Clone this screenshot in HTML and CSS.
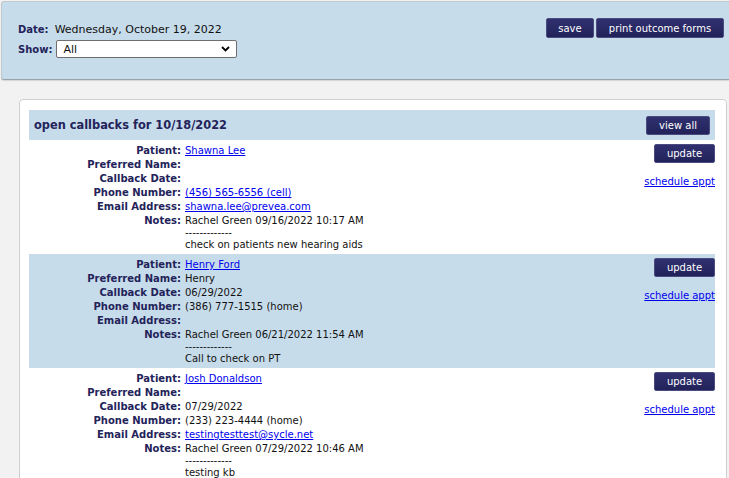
FILE: index.html
```html
<!DOCTYPE html>
<html>
<head>
<meta charset="utf-8">
<title>Callbacks</title>
<link rel="stylesheet" href="styles.css">
</head>
<body>
<div class="header">
  <div class="filters">
    <div class="field"><span class="flabel">Date:</span><span class="fvalue">Wednesday, October 19, 2022</span></div>
    <div class="field"><span class="flabel">Show:</span>
      <div class="select-wrap">
        <select class="select"><option>All</option></select>
        <svg class="chev" width="9" height="6" viewBox="0 0 9 6"><path d="M1 1 L4.5 4.5 L8 1" fill="none" stroke="#000" stroke-width="1.8"/></svg>
      </div>
    </div>
  </div>
  <div class="actions">
    <button class="btn btn-save">save</button>
    <button class="btn btn-print">print outcome forms</button>
  </div>
</div>

<div class="card">
  <div class="titlebar">
    <span class="title">open callbacks for 10/18/2022</span>
    <button class="btn btn-view">view all</button>
  </div>

  <div class="record">
    <div class="fields">
      <span class="lbl">Patient:</span><span class="val"><a href="#">Shawna Lee</a></span>
      <span class="lbl">Preferred Name:</span><span class="val"></span>
      <span class="lbl">Callback Date:</span><span class="val"></span>
      <span class="lbl">Phone Number:</span><span class="val"><a href="#">(456) 565-6556 (cell)</a></span>
      <span class="lbl">Email Address:</span><span class="val"><a href="#">shawna.lee@prevea.com</a></span>
      <span class="lbl">Notes:</span><span class="val notes">Rachel Green 09/16/2022 10:17 AM<br>-------------<br>check on patients new hearing aids</span>
    </div>
    <div class="side">
      <button class="btn btn-update">update</button>
      <a href="#" class="sched">schedule appt</a>
    </div>
  </div>

  <div class="record alt">
    <div class="fields">
      <span class="lbl">Patient:</span><span class="val"><a href="#">Henry Ford</a></span>
      <span class="lbl">Preferred Name:</span><span class="val">Henry</span>
      <span class="lbl">Callback Date:</span><span class="val">06/29/2022</span>
      <span class="lbl">Phone Number:</span><span class="val">(386) 777-1515 (home)</span>
      <span class="lbl">Email Address:</span><span class="val"></span>
      <span class="lbl">Notes:</span><span class="val notes">Rachel Green 06/21/2022 11:54 AM<br>-------------<br>Call to check on PT</span>
    </div>
    <div class="side">
      <button class="btn btn-update">update</button>
      <a href="#" class="sched">schedule appt</a>
    </div>
  </div>

  <div class="record">
    <div class="fields">
      <span class="lbl">Patient:</span><span class="val"><a href="#">Josh Donaldson</a></span>
      <span class="lbl">Preferred Name:</span><span class="val"></span>
      <span class="lbl">Callback Date:</span><span class="val">07/29/2022</span>
      <span class="lbl">Phone Number:</span><span class="val">(233) 223-4444 (home)</span>
      <span class="lbl">Email Address:</span><span class="val"><a href="#">testingtesttest@sycle.net</a></span>
      <span class="lbl">Notes:</span><span class="val notes">Rachel Green 07/29/2022 10:46 AM<br>-------------<br>testing kb</span>
    </div>
    <div class="side">
      <button class="btn btn-update">update</button>
      <a href="#" class="sched">schedule appt</a>
    </div>
  </div>
</div>
</body>
</html>
```

FILE: styles.css
```css
html, body {
  margin: 0;
  padding: 0;
}
body {
  background: #f2f2f2;
  font-family: "DejaVu Sans", Verdana, sans-serif;
  font-size: 10px;
  color: #111;
  overflow: hidden;
}
.header {
  margin: 1px 0 0 1px;
  height: 79px;
  box-sizing: border-box;
  background: #c7dcea;
  border: 1px solid #c2c8cc;
  border-right: none;
  border-bottom: 1px solid #9aa3a9;
  border-radius: 3px 0 0 3px;
  box-shadow: 0 1px 1px rgba(0,0,0,0.12);
  display: flex;
  justify-content: space-between;
  align-items: flex-start;
  padding: 16px 5px 0 16px;
}
.filters {
  display: flex;
  flex-direction: column;
  gap: 2px;
  padding-top: 2px;
}
.field {
  display: flex;
  align-items: center;
  min-height: 18px;
}
.flabel {
  font-weight: bold;
  font-size: 10px;
  color: #23235a;
  margin-right: 6px;
}
.fvalue {
  font-size: 11px;
  color: #111;
}
.select-wrap {
  position: relative;
  width: 181px;
  height: 18px;
  margin-left: -2px;
}
.select {
  appearance: none;
  -webkit-appearance: none;
  width: 100%;
  height: 18px;
  box-sizing: border-box;
  border: 1px solid #6e6e6e;
  border-radius: 2px;
  background: #fff;
  font-family: "DejaVu Sans", Verdana, sans-serif;
  font-size: 11px;
  color: #111;
  padding: 0 0 0 6px;
  margin: 0;
}
.chev {
  position: absolute;
  right: 7px;
  top: 6px;
  pointer-events: none;
}
.actions {
  display: flex;
  gap: 2px;
}
.btn {
  font-family: "DejaVu Sans", Verdana, sans-serif;
  font-size: 10px;
  color: #fff;
  background: linear-gradient(#303070, #22225a);
  border: 1px solid #4b4b80;
  border-radius: 2px;
  padding: 0;
  margin: 0;
  cursor: pointer;
}
.btn-save {
  width: 48px;
  height: 20px;
}
.btn-print {
  width: 128px;
  height: 20px;
}
.card {
  margin: 19px 2px 0 19px;
  background: #fff;
  border: 1px solid #cfcfcf;
  border-radius: 4px;
  padding: 10px 11px 0 9px;
}
.titlebar {
  height: 30px;
  background: #c7dcea;
  display: flex;
  align-items: center;
  justify-content: space-between;
  padding: 0 5px;
}
.title {
  font-weight: bold;
  font-size: 11.4px;
  color: #23235a;
}
.btn-view {
  width: 64px;
  height: 19px;
}
.record {
  display: flex;
  justify-content: space-between;
  padding: 4px 0 3px 0;
}
.record.alt {
  background: #c7dcea;
}
.fields {
  display: grid;
  grid-template-columns: 152px auto;
  column-gap: 4px;
  row-gap: 1px;
  line-height: 13px;
}
.lbl {
  font-weight: bold;
  color: #23235a;
  text-align: right;
}
.val {
  color: #111;
  min-height: 13px;
}
.notes {
  line-height: 12px;
  padding-top: 1px;
}
a {
  color: #0000ee;
}
.side {
  display: flex;
  flex-direction: column;
  align-items: flex-end;
}
.btn-update {
  width: 61px;
  height: 19px;
}
.sched {
  margin-top: 12px;
  line-height: 13px;
}
```
